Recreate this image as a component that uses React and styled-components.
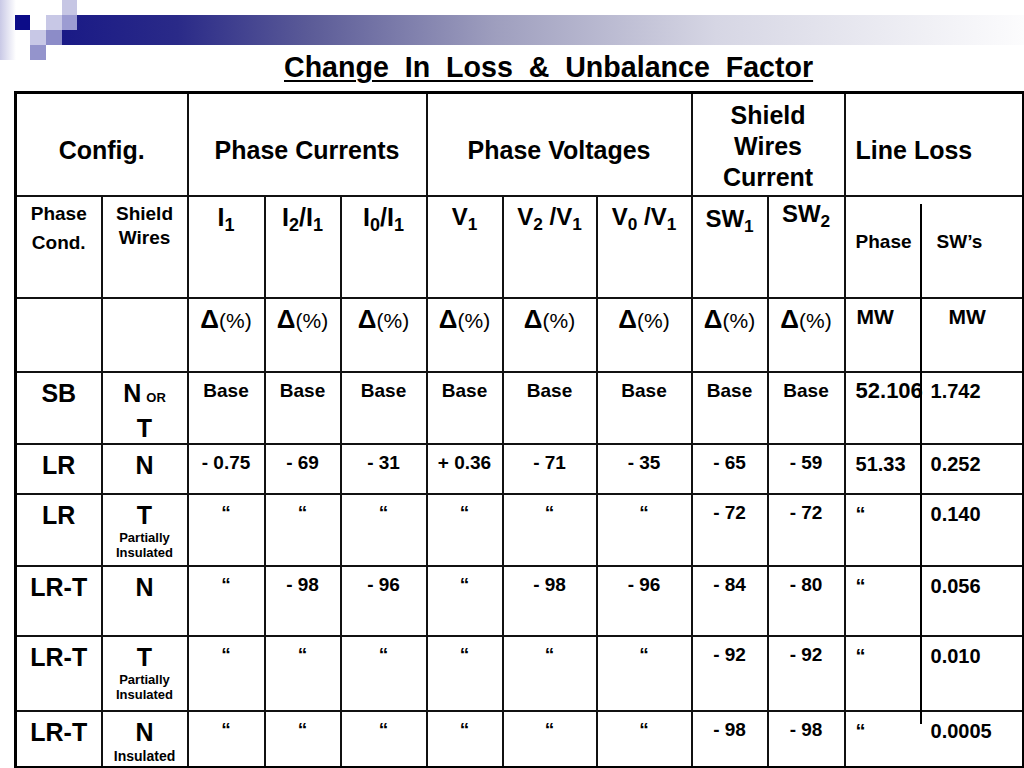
import React from 'react';
import styled, { createGlobalStyle } from 'styled-components';

const GlobalStyle = createGlobalStyle`
    html, body {
        margin: 0;
        padding: 0;
        background: #fff;
    }
    body {
        font-family: "Liberation Sans", Arial, Helvetica, sans-serif;
        color: #000;
    }
`

const Page = styled.div`
    width: 1024px;
    height: 768px;
    overflow: hidden;
    position: relative;
`

const Banner = styled.svg`
    display: block;
`

const Title = styled.h1`
    margin: -8px 0 0 0;
    padding-left: 284px;
    font-size: 28.6px;
    line-height: 30px;
    font-weight: bold;
    text-decoration: underline;
    text-decoration-thickness: 2px;
    text-underline-offset: 3px;
    white-space: pre;
`

const TableWrap = styled.div`
    position: relative;
    margin: 9px 0 0 14px;
    width: 1008px;
`

const Table = styled.table`
    width: 1008px;
    table-layout: fixed;
    border-collapse: collapse;
    border: 3px solid #000;
`

const Cell = styled.td`
    border: 2px solid #111;
    padding: ${p => p.$pad || 5}px ${p => p.$side || 0}px 0;
    height: ${p => p.$h}px;
    box-sizing: border-box;
    vertical-align: ${p => p.$middle ? 'middle' : 'top'};
    text-align: ${p => p.$left ? 'left' : 'center'};
    font-weight: bold;
    font-size: ${p => p.$size || 19}px;
    line-height: ${p => p.$lh || 26}px;
    white-space: nowrap;
    overflow: visible;
`

const Sub = styled.sub`
    font-size: 0.72em;
    vertical-align: -0.28em;
    line-height: 0;
`

const Delta = styled.span`
    font-size: 26px;
    font-weight: bold;
`

const Pct = styled.span`
    font-size: 21px;
    font-weight: normal;
`

const Small = styled.span`
    display: block;
    font-size: ${p => p.$size || 13}px;
    line-height: ${p => p.$lh || 15}px;
`

const Or = styled.span`
    font-size: 13px;
    margin-left: 5px;
`

const Split = styled.div`
    display: grid;
    grid-template-columns: 76px 1fr;
    text-align: left;
    font-size: ${p => p.$size || 20}px;
    line-height: ${p => p.$lh || 26}px;
`

const Part = styled.span`
    padding-left: ${p => p.$indent || 10}px;
    font-size: ${p => p.$size ? `${p.$size}px` : 'inherit'};
`

const Divider = styled.div`
    position: absolute;
    left: 906px;
    top: 113px;
    width: 1.5px;
    height: 520px;
    background: #000;
`

const q = '\u201C'

const rows = [
    {
        h: 72, cond: 'SB', main: 'N', or: true, second: 'T',
        vals: Array(8).fill('Base'),
        loss: ['52.106', '1.742'], bigLoss: true,
    },
    {
        h: 50, cond: 'LR', main: 'N',
        vals: ['- 0.75', '- 69', '- 31', '+ 0.36', '- 71', '- 35', '- 65', '- 59'],
        loss: ['51.33', '0.252'],
    },
    {
        h: 72, cond: 'LR', main: 'T', note: ['Partially', 'Insulated'],
        vals: [q, q, q, q, q, q, '- 72', '- 72'],
        loss: [q, '0.140'],
    },
    {
        h: 70, cond: 'LR-T', main: 'N',
        vals: [q, '- 98', '- 96', q, '- 98', '- 96', '- 84', '- 80'],
        loss: [q, '0.056'],
    },
    {
        h: 75, cond: 'LR-T', main: 'T', note: ['Partially', 'Insulated'],
        vals: [q, q, q, q, q, q, '- 92', '- 92'],
        loss: [q, '0.010'],
    },
    {
        h: 57, cond: 'LR-T', main: 'N', note: ['Insulated'], noteBig: true,
        vals: [q, q, q, q, q, q, '- 98', '- 98'],
        loss: [q, '0.0005'],
    },
]

const widths = [86, 86, 77, 76, 86, 76, 94, 95, 76, 77, 179]

function TopBanner() {
    return (
        <Banner width="1024" height="60" viewBox="0 0 1024 60">
            <defs>
                <linearGradient id="stripe" x1="0" x2="1" y1="0" y2="0">
                    <stop offset="0" stopColor="#c9c9e6" />
                    <stop offset="1" stopColor="#ffffff" />
                </linearGradient>
                <linearGradient id="bar" gradientUnits="userSpaceOnUse" x1="62" x2="1024" y1="0" y2="0">
                    <stop offset="0" stopColor="#1a1a86" />
                    <stop offset="0.12" stopColor="#2a2a88" />
                    <stop offset="0.26" stopColor="#5c5c98" />
                    <stop offset="0.45" stopColor="#9e9ebe" />
                    <stop offset="0.68" stopColor="#d6d6e4" />
                    <stop offset="1" stopColor="#fcfcfd" />
                </linearGradient>
            </defs>
            <rect x="0" y="0" width="16" height="60" fill="url(#stripe)" />
            <rect x="62" y="15" width="962" height="30" fill="url(#bar)" />
            <rect x="62" y="0" width="15" height="15" fill="#c6c6e4" />
            <rect x="15" y="15" width="15" height="15" fill="#0c0c88" />
            <rect x="46" y="15" width="16" height="15" fill="#c8c8e6" />
            <rect x="62" y="15" width="15" height="15" fill="#9c9cd2" />
            <rect x="30" y="30" width="16" height="15" fill="#c8c8e6" />
            <rect x="46" y="30" width="16" height="15" fill="#8c8cc8" />
            <rect x="30" y="45" width="16" height="15" fill="#9494cc" />
        </Banner>
    )
}

function DeltaPct() {
    return (
        <>
            <Delta>{'\u0394'}</Delta><Pct>(%)</Pct>
        </>
    )
}

export default function App() {
    return (
        <Page>
            <GlobalStyle />
            <TopBanner />
            <Title>{'Change  In  Loss  &  Unbalance  Factor'}</Title>
            <TableWrap>
                <Table>
                    <colgroup>
                        {widths.map((w, i) => <col key={i} style={{ width: w }} />)}
                    </colgroup>
                    <tbody>
                        <tr>
                            <Cell colSpan={2} $h={103} $middle $size={25} $lh={31} $pad={13}>Config.</Cell>
                            <Cell colSpan={3} $h={103} $middle $size={25} $lh={31} $pad={13}>Phase Currents</Cell>
                            <Cell colSpan={3} $h={103} $middle $size={25} $lh={31} $pad={13}>Phase Voltages</Cell>
                            <Cell colSpan={2} $h={103} $middle $size={25} $lh={31} $pad={0}>
                                Shield<br />Wires<br />Current
                            </Cell>
                            <Cell $h={103} $middle $left $side={10} $size={25} $lh={31} $pad={13}>Line Loss</Cell>
                        </tr>
                        <tr>
                            <Cell $h={102} $pad={2} $lh={29}>Phase<br />Cond.</Cell>
                            <Cell $h={102} $pad={0} $lh={24}>Shield<br />Wires</Cell>
                            <Cell $h={102} $size={25} $lh={30}>I<Sub>1</Sub></Cell>
                            <Cell $h={102} $size={25} $lh={30}>I<Sub>2</Sub>/I<Sub>1</Sub></Cell>
                            <Cell $h={102} $size={25} $lh={30}>I<Sub>0</Sub>/I<Sub>1</Sub></Cell>
                            <Cell $h={102} $size={24} $lh={30}>V<Sub>1</Sub></Cell>
                            <Cell $h={102} $size={24} $lh={30}>V<Sub>2</Sub> /V<Sub>1</Sub></Cell>
                            <Cell $h={102} $size={24} $lh={30}>V<Sub>0</Sub> /V<Sub>1</Sub></Cell>
                            <Cell $h={102} $size={24} $lh={30} $pad={7}>SW<Sub>1</Sub></Cell>
                            <Cell $h={102} $size={24} $lh={30} $pad={2}>SW<Sub>2</Sub></Cell>
                            <Cell $h={102} $pad={32} $side={0}>
                                <Split $size={19}>
                                    <Part>Phase</Part>
                                    <Part $indent={15}>SW’s</Part>
                                </Split>
                            </Cell>
                        </tr>
                        <tr>
                            <Cell $h={74} />
                            <Cell $h={74} />
                            {Array.from({ length: 8 }).map((_, i) => (
                                <Cell key={i} $h={74} $pad={7}><DeltaPct /></Cell>
                            ))}
                            <Cell $h={74} $pad={5}>
                                <Split $size={21}>
                                    <Part $indent={11}>MW</Part>
                                    <Part $indent={27}>MW</Part>
                                </Split>
                            </Cell>
                        </tr>
                        {rows.map((r, i) => (
                            <tr key={i}>
                                <Cell $h={r.h} $size={25} $lh={30}>{r.cond}</Cell>
                                <Cell $h={r.h} $size={25} $lh={30}>
                                    {r.main}{r.or && <Or>OR</Or>}
                                    {r.second && <><br />{r.second}</>}
                                    {r.note && r.note.map(n => (
                                        <Small key={n} $size={r.noteBig ? 14 : 13} $lh={r.noteBig ? 18 : 15}>{n}</Small>
                                    ))}
                                </Cell>
                                {r.vals.map((v, j) => (
                                    <Cell key={j} $h={r.h}>{v}</Cell>
                                ))}
                                <Cell $h={r.h} $pad={r.bigLoss ? 5 : 6}>
                                    <Split>
                                        <Part $size={r.bigLoss ? 22 : null}>{r.loss[0]}</Part>
                                        <Part $indent={9}>{r.loss[1]}</Part>
                                    </Split>
                                </Cell>
                            </tr>
                        ))}
                    </tbody>
                </Table>
                <Divider />
            </TableWrap>
        </Page>
    )
}
